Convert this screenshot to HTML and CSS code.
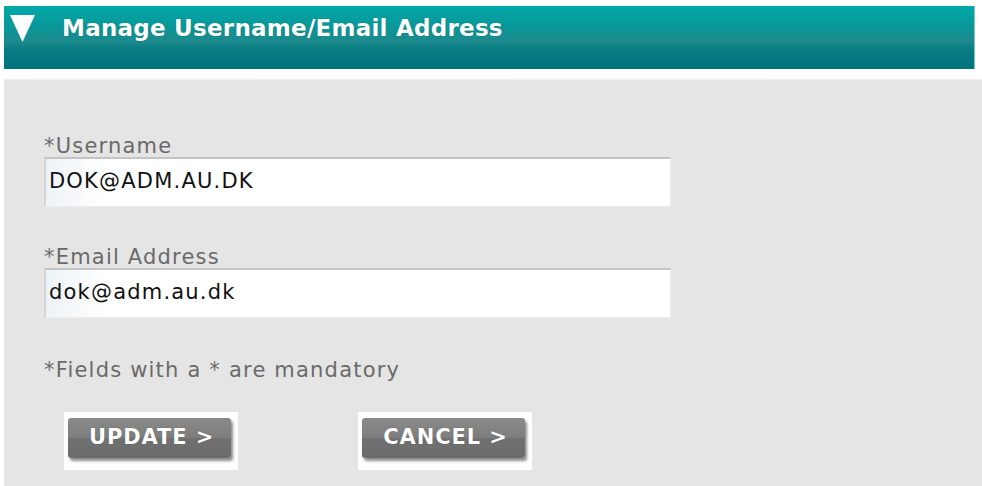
FILE: index.html
```html
<!DOCTYPE html>
<html>
<head>
<meta charset="utf-8">
<link rel="stylesheet" href="styles.css">
</head>
<body>
<div class="page">
  <div class="header">
    <svg class="toggle" width="25" height="27" viewBox="0 0 25 27"><polygon points="0,0 25,0 12.5,27" fill="#ffffff"/></svg>
    <span class="title">Manage Username/Email Address</span>
  </div>
  <form class="panel">
    <div class="field">
      <label class="label">*Username</label>
      <div class="input">DOK@ADM.AU.DK</div>
    </div>
    <div class="field">
      <label class="label">*Email Address</label>
      <div class="input">dok@adm.au.dk</div>
    </div>
    <p class="note">*Fields with a * are mandatory</p>
    <div class="actions">
      <div class="btn-wrap"><span class="btn">UPDATE &gt;</span></div>
      <div class="btn-wrap"><span class="btn">CANCEL &gt;</span></div>
    </div>
  </form>
</div>
</body>
</html>
```
FILE: styles.css
```css
html, body {
  margin: 0;
  padding: 0;
  background: #ffffff;
}

.page {
  padding: 6px 0 0 4px;
  font-family: "DejaVu Sans", Verdana, sans-serif;
}

.header {
  width: 971px;
  height: 63px;
  box-sizing: border-box;
  border-right: 1px solid #6fcfd0;
  background: linear-gradient(to bottom, #02a9a9 0%, #0a9697 35%, #1d8a8d 55%, #057c82 70%, #00737e 100%);
  display: flex;
  align-items: flex-start;
}

.toggle {
  margin: 9px 0 0 6px;
  flex: none;
}

.title {
  margin: 7px 0 0 27px;
  color: #ffffff;
  font-weight: bold;
  font-size: 23px;
  letter-spacing: 0.25px;
  line-height: 30px;
  text-shadow: 0 0 1px rgba(0, 60, 60, 0.5);
}

.panel {
  margin: 10px 0 0;
  height: 407px;
  background: #e5e5e5;
  border-top: 1px solid #eeeeee;
  box-sizing: border-box;
  padding: 55px 0 0 40px;
  font-size: 21px;
  letter-spacing: 1.2px;
}

.field {
  margin-bottom: 39px;
}

.label {
  display: block;
  color: #6a6a6a;
  line-height: 22px;
}

.input {
  width: 627px;
  height: 50px;
  box-sizing: border-box;
  border-top: 2px solid #c4c4c4;
  border-left: 2px solid #d6d6d6;
  border-right: 1px solid #eeeeee;
  border-bottom: 1px solid #eeeeee;
  background: linear-gradient(to right, #edf3f7 0px, #ffffff 60px);
  color: #111111;
  line-height: 44px;
  padding-left: 3px;
}

.note {
  margin: 0;
  padding-top: 2px;
  color: #6a6a6a;
  line-height: 22px;
}

.actions {
  display: flex;
  gap: 120px;
  margin: 31px 0 0 20px;
}

.btn-wrap {
  background: #ffffff;
  padding: 6px 7px 12px 4px;
}

.btn {
  display: block;
  height: 40px;
  padding: 0 17px 0 21px;
  box-sizing: border-box;
  border-radius: 3px;
  background: linear-gradient(to bottom, #8a8a8a 0%, #7e7e7e 48%, #707070 52%, #6c6c6c 100%);
  box-shadow: 2px 3px 3px rgba(0, 0, 0, 0.45);
  color: #ffffff;
  font-weight: bold;
  letter-spacing: 0.9px;
  line-height: 38px;
  white-space: nowrap;
  text-shadow: 0 0 1px rgba(0, 0, 0, 0.4);
}
```
